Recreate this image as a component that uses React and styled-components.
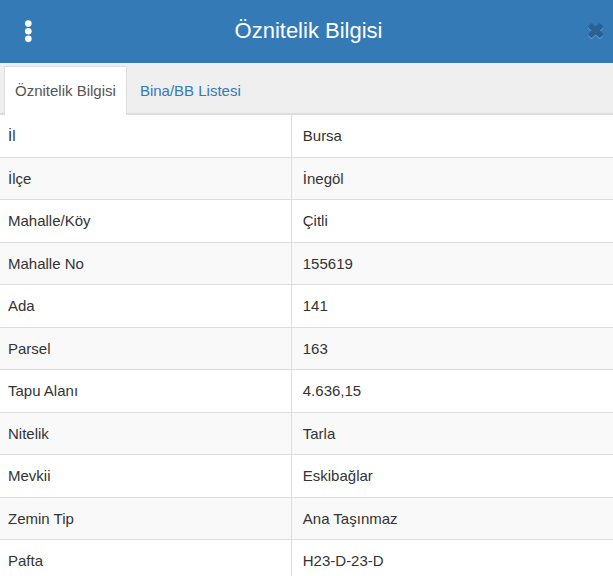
import React, { useState } from 'react';
import styled, { createGlobalStyle } from 'styled-components';

const GlobalStyle = createGlobalStyle`
  * {
    box-sizing: border-box;
  }
  body {
    margin: 0;
    background: #fff;
    color: #333;
    font-family: "Liberation Sans", Arial, sans-serif;
    font-size: 15px;
    line-height: 21px;
    overflow-x: hidden;
    scrollbar-width: none;
  }
`

const Header = styled.header`
  display: grid;
  grid-template-columns: 44px 1fr 40px;
  align-items: center;
  height: 63px;
  padding: 0 8px;
  background: #337ab7;
  color: #fff;
`
const Title = styled.h1`
  margin: 0;
  padding-bottom: 1px;
  font-size: 22px;
  font-weight: normal;
  line-height: 32px;
  text-align: center;
`
const IconButton = styled.button`
  display: flex;
  justify-self: ${props => props.$align};
  padding: 0;
  border: none;
  background: none;
  color: inherit;
  cursor: pointer;
`
const Tabs = styled.nav`
  display: flex;
  padding: 3px 4px 0;
  background: #efefef;
  border-bottom: 2px solid #ddd;
`
const Tab = styled.a`
  height: 49px;
  margin-right: 2px;
  margin-bottom: -2px;
  padding: 13px 10px 0;
  border: 1px solid ${props => props.$active ? '#ddd' : 'transparent'};
  border-bottom: none;
  border-radius: 1px 1px 0 0;
  background: ${props => props.$active ? '#fff' : 'transparent'};
  color: ${props => props.$active ? '#555' : '#337ab7'};
  text-decoration: none;
`
const Table = styled.table`
  width: 100%;
  border-collapse: separate;
  border-spacing: 0;
  table-layout: fixed;
`
const Row = styled.tr`
  height: 43px;
  &:nth-child(even) {
    height: 42px;
    background: #f9f9f9;
  }
`
const Label = styled.th`
  width: 47.6%;
  padding: 0 8px 1px;
  border-right: 1px solid #ddd;
  border-bottom: 1px solid #ddd;
  font-weight: normal;
  text-align: left;
`
const Value = styled.td`
  padding: 0 11px 1px;
  border-bottom: 1px solid #ddd;
`

const tabs = ['Öznitelik Bilgisi', 'Bina/BB Listesi'];

const rows = [
  ['İl', 'Bursa'],
  ['İlçe', 'İnegöl'],
  ['Mahalle/Köy', 'Çitli'],
  ['Mahalle No', '155619'],
  ['Ada', '141'],
  ['Parsel', '163'],
  ['Tapu Alanı', '4.636,15'],
  ['Nitelik', 'Tarla'],
  ['Mevkii', 'Eskibağlar'],
  ['Zemin Tip', 'Ana Taşınmaz'],
  ['Pafta', 'H23-D-23-D'],
];

const DotsIcon = () => (
  <svg width="40" height="24" viewBox="0 0 40 24" fill="currentColor" aria-hidden="true">
    <circle cx="20.3" cy="3.6" r="3.3" />
    <circle cx="20.3" cy="11.2" r="3.3" />
    <circle cx="20.3" cy="18.8" r="3.3" />
  </svg>
);

const crossPath = 'M4.6 1.6 L2.4 3.8 L6.1 7.6 L2.4 11.4 L4.6 13.6 L8.7 9.9 L12.8 13.6 L15 11.4 L11.3 7.6 L15 3.8 L12.8 1.6 L8.7 5.3 Z';

const CloseIcon = () => (
  <svg width="18" height="17" viewBox="0 0 18 17" strokeWidth="2.6" strokeLinejoin="round" aria-hidden="true">
    <path d={crossPath} fill="#70a2cd" stroke="#70a2cd" transform="translate(0 1)" />
    <path d={crossPath} fill="#296292" stroke="#296292" />
  </svg>
);

export default function App() {
  const [active, setActive] = useState(0);

  return (
    <>
      <GlobalStyle />
      <Header>
        <IconButton $align="start" aria-label="Menü"><DotsIcon /></IconButton>
        <Title>Öznitelik Bilgisi</Title>
        <IconButton $align="end" aria-label="Kapat"><CloseIcon /></IconButton>
      </Header>
      <Tabs>
        {tabs.map((name, index) => (
          <Tab key={name} href="#" $active={index === active} onClick={() => setActive(index)}>
            {name}
          </Tab>
        ))}
      </Tabs>
      <Table>
        <tbody>
          {rows.map(([label, value]) => (
            <Row key={label}>
              <Label scope="row">{label}</Label>
              <Value>{value}</Value>
            </Row>
          ))}
        </tbody>
      </Table>
    </>
  );
}
